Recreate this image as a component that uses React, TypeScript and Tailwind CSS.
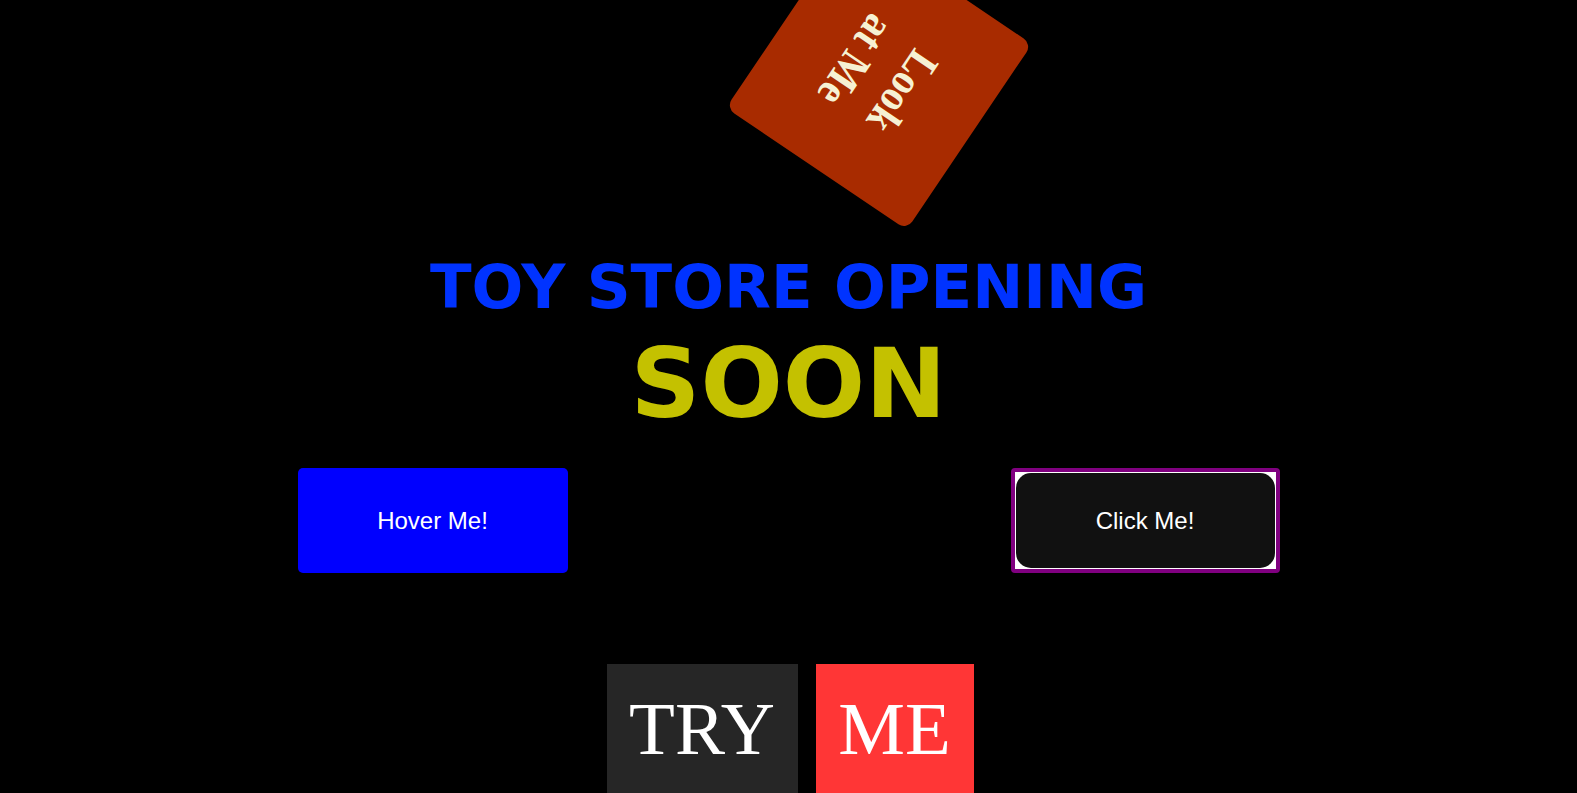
import React from "react";

export default function App() {
  return (
    <div className="relative h-[793px] w-full overflow-hidden bg-black">
      {/* rotated card */}
      <div
        className="absolute left-[767px] top-[-33px] flex h-[218px] w-[224px] rotate-[124deg] items-center justify-center rounded-[10px] bg-[#a82b00]"
      >
        <div className="scale-y-[1.12] text-center text-[40px] font-bold leading-[50px] text-[#f6f1d3] [font-family:'Liberation_Serif',serif]">
          Look
          <br />
          at Me
        </div>
      </div>

      <div className="flex flex-col items-center pt-[251px]">
        <h1 className="text-[61px] font-bold leading-[normal] text-[#0033ff] [font-family:'DejaVu_Sans',sans-serif]">
          TOY STORE OPENING
        </h1>
        <div className="mt-[5px] text-[97px] font-bold leading-[normal] text-[#c4c100] [font-family:'DejaVu_Sans',sans-serif]">
          SOON
        </div>

        <div className="mt-[28px] flex w-[982px] justify-between [font-family:'Liberation_Sans',sans-serif]">
          <div className="flex h-[105px] w-[270px] items-center justify-center rounded-[5px] bg-[#0000ff] text-[24px] text-white">
            Hover Me!
          </div>
          <div className="flex h-[105px] w-[269px] rounded-[4px] border-[4px] border-[#800080] bg-white p-[1px]">
            <div className="flex flex-1 items-center justify-center rounded-[15px] bg-[#111111] text-[24px] text-white">
              Click Me!
            </div>
          </div>
        </div>

        <div className="mt-[91px] flex gap-[18px] pl-[3px] text-[75px] leading-[normal] text-white [font-family:'Liberation_Serif',serif]">
          <div className="flex w-[191px] justify-center bg-[#262626] pt-[22px] pb-[24px]">TRY</div>
          <div className="flex w-[158px] justify-center bg-[#ff3636] pt-[22px] pb-[24px]">ME</div>
        </div>
      </div>
    </div>
  );
}
